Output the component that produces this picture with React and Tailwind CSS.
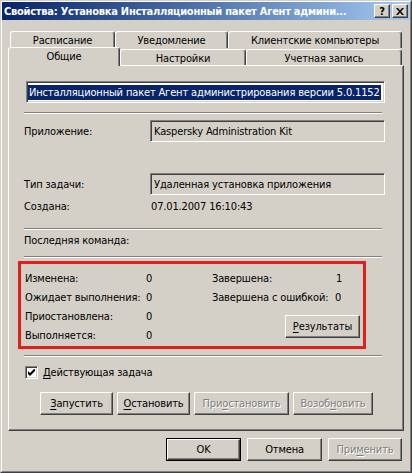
import React from "react";

const raised =
  "border border-t-white border-l-white border-r-[#404040] border-b-[#404040] shadow-[inset_-1px_-1px_0_#808080]";
const sunken =
  "border border-t-[#808080] border-l-[#808080] border-r-white border-b-white shadow-[inset_1px_1px_0_#404040,inset_-1px_-1px_0_#d4d0c8]";
const dis = "text-[#808080] [text-shadow:1px_1px_0_#ffffff]";

function Btn({ w, children, disabled, def, className = "" }) {
  const inner = (
    <div
      className={`${raised} bg-[#d4d0c8] h-full w-full flex items-center justify-center ${
        disabled ? dis : ""
      }`}
    >
      {children}
    </div>
  );
  if (def)
    return (
      <div className={`border border-black h-[23px] ${className}`} style={{ width: w }}>
        {inner}
      </div>
    );
  return (
    <div className={`h-[23px] ${className}`} style={{ width: w }}>
      {inner}
    </div>
  );
}

function Tab({ w, children, sel }) {
  return (
    <div
      className={`border-t border-l border-r border-t-white border-l-white border-r-[#404040] shadow-[inset_-1px_0_0_#808080] rounded-t-[3px] bg-[#d4d0c8] flex items-center justify-center ${
        sel ? "h-[19px] -mt-[2px] relative z-10 pb-[2px]" : "h-[17px]"
      }`}
      style={{ width: w }}
    >
      {children}
    </div>
  );
}

function Sep({ className = "" }) {
  return <div className={`w-[358px] h-[2px] border-t border-t-[#808080] border-b border-b-white ${className}`} />;
}

function U({ children }) {
  return <span className="underline underline-offset-[2px]">{children}</span>;
}

export default function App() {
  return (
    <div className="w-[412px] h-[473px] bg-[#d4d0c8] border border-t-[#d4d0c8] border-l-[#d4d0c8] border-r-[#404040] border-b-[#404040] font-['DejaVu_Sans_Condensed','DejaVu_Sans',sans-serif] font-stretch-condensed text-[11px] tracking-[-0.15px] text-black leading-none overflow-hidden">
      <div className="h-full border border-t-white border-l-white border-r-[#808080] border-b-[#808080] flex flex-col">
        {/* title bar */}
        <div className="h-[18px] bg-gradient-to-r from-[#0a246a] to-[#a6caf0] flex items-center pl-[2px] pr-[2px]">
          <div className="flex-1 text-white font-bold tracking-[-0.25px] whitespace-nowrap overflow-hidden">
            Свойства: Установка Инсталляционный пакет Агент админи...
          </div>
          <div className={`${raised} bg-[#d4d0c8] w-[16px] h-[14px] flex items-center justify-center font-bold text-[11px]`}>?</div>
          <div className={`${raised} bg-[#d4d0c8] w-[16px] h-[14px] flex items-center justify-center ml-[2px]`}>
            <svg width="8" height="7" viewBox="0 0 8 7">
              <path d="M0 0h2l2 2.5L6 0h2L5 3.5 8 7H6L4 4.5 2 7H0l3-3.5z" fill="#000" />
            </svg>
          </div>
        </div>

        {/* tabs */}
        <div className="px-[6px] flex flex-col">
          <div className="flex h-[18px] mt-[11px] pl-[2px]">
            <Tab w={105}>Расписание</Tab>
            <Tab w={113}>Уведомление</Tab>
            <Tab w={174}>Клиентские компьютеры</Tab>
          </div>
          <div className="flex h-[16px] items-start">
            <Tab w={112} sel>
              Общие
            </Tab>
            <Tab w={126}>Настройки</Tab>
            <Tab w={156}>Учетная запись</Tab>
          </div>

          {/* panel */}
          <div className="h-[366px] border border-t-white border-l-white border-r-[#404040] border-b-[#404040] shadow-[inset_-1px_-1px_0_#808080] pl-[15px] pt-[15px] flex flex-col">
            <div className={`${sunken} bg-white h-[22px] w-[359px] ml-[2px] flex items-center pl-[1px]`}>
              <span className="bg-[#0a246a] text-white px-[1px] py-[2px] whitespace-nowrap">
                Инсталляционный пакет Агент администрирования версии 5.0.1152
              </span>
            </div>
            <Sep className="mt-[9px]" />

            <div className="flex items-center h-[22px] mt-[6px]">
              <div className="w-[126px]">Приложение:</div>
              <div className={`${sunken} h-[22px] w-[235px] flex items-center pl-[3px]`}>Kaspersky Administration Kit</div>
            </div>

            <div className="flex items-center h-[22px] mt-[31px]">
              <div className="w-[126px]">Тип задачи:</div>
              <div className={`${sunken} h-[22px] w-[235px] flex items-center pl-[3px]`}>Удаленная установка приложения</div>
            </div>

            <div className="flex items-center h-[14px] mt-[4px]">
              <div className="w-[127px]">Создана:</div>
              <div>07.01.2007 16:10:43</div>
            </div>

            <Sep className="mt-[15px]" />
            <div className="flex items-center h-[14px] mt-[3px]">Последняя команда:</div>
            <Sep className="mt-[9px]" />

            {/* red box */}
            <div className="mt-[3px] -ml-[6px] w-[348px] h-[88px] border-[3px] border-[#e0201c] pl-[4px] pt-[5px] flex">
              <div className="flex flex-col w-[187px]">
                {[
                  ["Изменена:", "0"],
                  ["Ожидает выполнения:", "0"],
                  ["Приостановлена:", "0"],
                  ["Выполняется:", "0"],
                ].map(([l, v]) => (
                  <div key={l} className="flex items-center h-[19px]">
                    <div className="w-[121px] whitespace-nowrap">{l}</div>
                    <div>{v}</div>
                  </div>
                ))}
              </div>
              <div className="flex flex-col">
                <div className="flex items-center h-[19px]">
                  <div className="w-[124px]">Завершена:</div>
                  <div>1</div>
                </div>
                <div className="flex items-center h-[19px]">
                  <div className="w-[123px] whitespace-nowrap">Завершена с ошибкой:</div>
                  <div>0</div>
                </div>
                <Btn w={75} className="mt-[8px] ml-[73px]">
                  <span>
                    <U>Р</U>езультаты
                  </span>
                </Btn>
              </div>
            </div>

            <Sep className="mt-[6px]" />

            <div className="flex items-center mt-[9px] h-[13px]">
              <div className={`${sunken} bg-white w-[13px] h-[13px] ml-[1px] flex items-center justify-center`}>
                <svg width="7" height="7" viewBox="0 0 7 7">
                  <path d="M0 2l2 2 5-5v2L2 6 0 4z" fill="#000" />
                  <path d="M0 3l2 2 5-5v2L2 7 0 5z" fill="#000" />
                </svg>
              </div>
              <div className="ml-[5px]">
                <U>Д</U>ействующая задача
              </div>
            </div>

            <div className="flex mt-[13px] ml-[16px] gap-[4px]">
              <Btn w={73}>
                <span>
                  <U>З</U>апустить
                </span>
              </Btn>
              <Btn w={73}>
                <span>
                  <U>О</U>становить
                </span>
              </Btn>
              <Btn w={95} disabled>
                <span>
                  При<U>о</U>становить
                </span>
              </Btn>
              <Btn w={80} disabled>
                <span>
                  Возоб<U>н</U>овить
                </span>
              </Btn>
            </div>
          </div>
        </div>

        {/* bottom buttons */}
        <div className="flex justify-end gap-[6px] pr-[8px] mt-[7px]">
          <Btn w={75} def>
            OK
          </Btn>
          <Btn w={75}>Отмена</Btn>
          <Btn w={74} disabled>
            <span>
              При<U>м</U>енить
            </span>
          </Btn>
        </div>
      </div>
    </div>
  );
}
